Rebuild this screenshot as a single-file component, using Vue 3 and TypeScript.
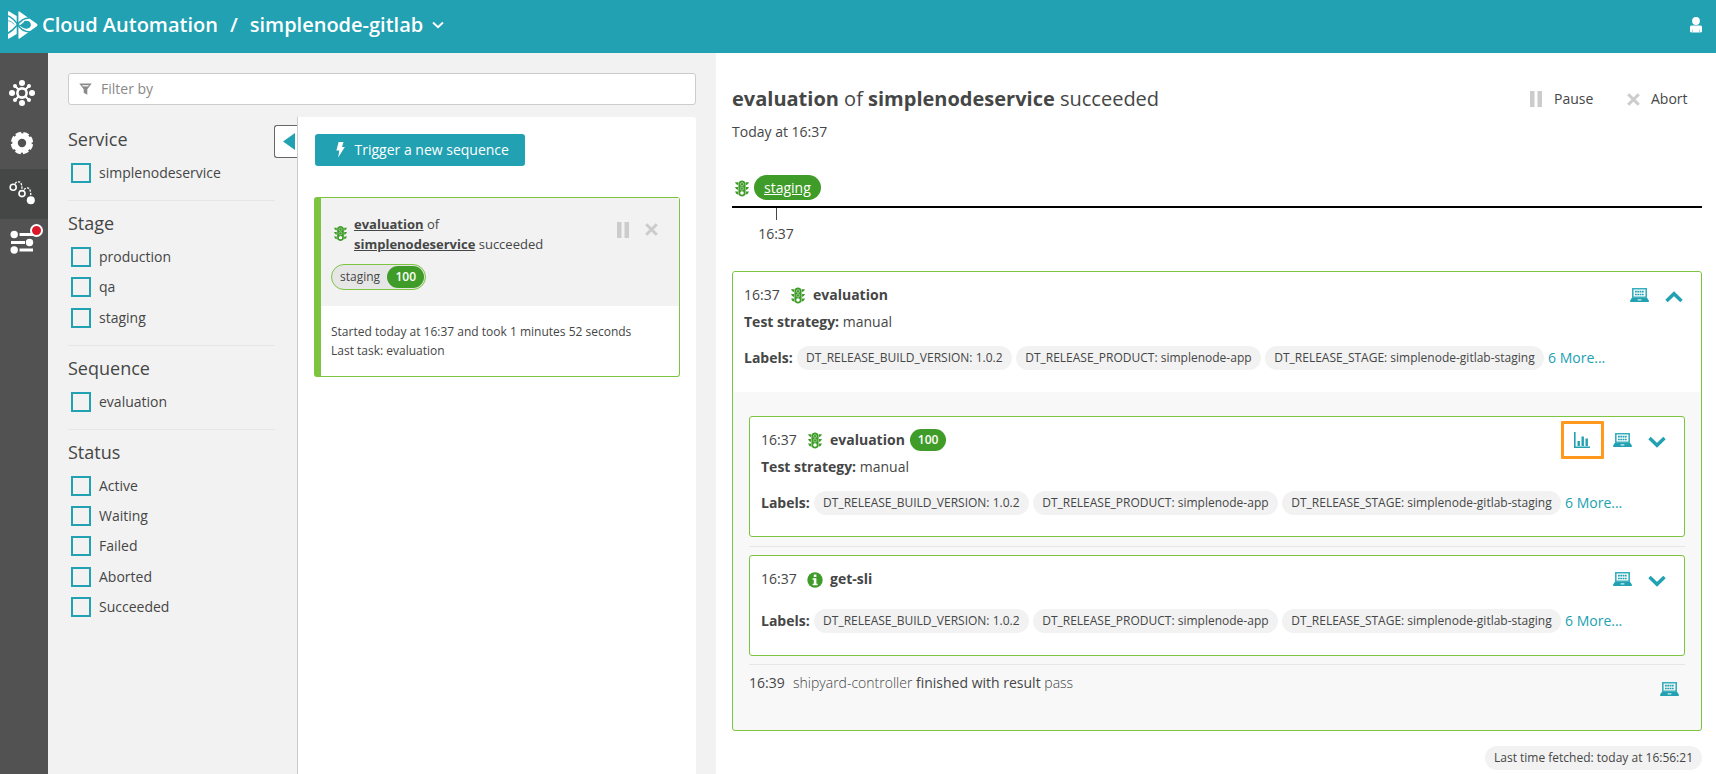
<script setup lang="ts">
interface FilterGroup {
  title: string
  options: string[]
}

interface Task {
  time: string
  icon: string
  name: string
  score?: number
  strategy?: string
}

const navItems = [
  { icon: 'hub', active: false },
  { icon: 'gear', active: false },
  { icon: 'sequence', active: true },
  { icon: 'sliders', active: false, badge: true },
]

const filters: FilterGroup[] = [
  { title: 'Service', options: ['simplenodeservice'] },
  { title: 'Stage', options: ['production', 'qa', 'staging'] },
  { title: 'Sequence', options: ['evaluation'] },
  { title: 'Status', options: ['Active', 'Waiting', 'Failed', 'Aborted', 'Succeeded'] },
]

const labels: string[] = [
  'DT_RELEASE_BUILD_VERSION: 1.0.2',
  'DT_RELEASE_PRODUCT: simplenode-app',
  'DT_RELEASE_STAGE: simplenode-gitlab-staging',
]

const tasks: Task[] = [
  { time: '16:37', icon: 'traffic', name: 'evaluation', score: 100, strategy: 'manual' },
  { time: '16:37', icon: 'info', name: 'get-sli' },
]
</script>

<template>
  <div class="app">
    <svg class="sprite" aria-hidden="true">
      <symbol id="traffic" viewBox="0 0 14 17">
        <path d="M4.400 1.400Q7-.6 9.600 1.400Q10.600 2 10.600 3V14Q10.600 15.200 9.600 15.500Q7 17.400 4.400 15.500Q3.400 15.200 3.400 14V3Q3.400 2 4.400 1.400Z" fill="#3f9c29" />
        <path d="M0 2.200H3V5.200Q.8 4.800 0 2.200ZM0 6.900H3V9.900Q.8 9.500 0 6.900ZM0 11.600H3V14.600Q.8 14.200 0 11.600ZM14 2.200H11V5.200Q13.200 4.800 14 2.200ZM14 6.900H11V9.900Q13.200 9.500 14 6.900ZM14 11.600H11V14.600Q13.200 14.200 14 11.600Z" fill="#3f9c29" />
        <circle cx="7" cy="4.200" r="1.600" fill="none" stroke="#a9d49f" stroke-width=".8" />
        <circle cx="7" cy="8.500" r="1.600" fill="none" stroke="#a9d49f" stroke-width=".8" />
        <circle cx="7" cy="13" r="1.800" fill="#fff" />
      </symbol>
      <symbol id="info" viewBox="0 0 16 16">
        <circle cx="8" cy="8" r="7.700" fill="#3f9c29" />
        <path d="M6.800 2.600h2.600v2.300H6.800zM5.600 6.300h3.800v5.500h1.200v1.400H5.600v-1.400h1.200V7.700H5.600z" fill="#fff" />
      </symbol>
      <symbol id="laptop" viewBox="0 0 19 14">
        <path fill-rule="evenodd" d="M2 0H17V9.800H2ZM3.600 1.500V8.600H15.400V1.500Z" fill="#35aebd" />
        <path d="M2.100 9.400H16.900L18.800 12.400V13.900H.2V12.400Z" fill="#21a1b2" />
        <path d="M5 3.600H14M5 6.500H14" stroke="#21a1b2" stroke-width="1.600" stroke-dasharray="1.800 .5" />
        <path d="M7.600 11.900H11.400" stroke="#fff" stroke-width="1" />
      </symbol>
      <symbol id="chart" viewBox="0 0 16 16">
        <path d="M.8 0V15.200H16" fill="none" stroke="#21a1b2" stroke-width="1.600" />
        <path d="M3.500 9H5.900V14H3.500ZM7.500 4.500H9.900V14H7.500ZM11.500 6.500H13.900V14H11.500Z" fill="#21a1b2" />
      </symbol>
      <symbol id="chevron" viewBox="0 0 18 12">
        <path d="M1.500 2L9 9.300L16.500 2" fill="none" stroke="#21a1b2" stroke-width="3.400" />
      </symbol>
      <symbol id="pause" viewBox="0 0 12 16">
        <path d="M0 0H4.500V16H0ZM7.500 0H12V16H7.500Z" fill="#ccc" />
      </symbol>
      <symbol id="cross" viewBox="0 0 13 13">
        <path d="M1.200 1.200L11.800 11.800M11.800 1.200L1.200 11.800" stroke="#ccc" stroke-width="3" />
      </symbol>
      <symbol id="hub" viewBox="0 0 26 26">
        <path d="M6 6L20 20M20 6L6 20" stroke="#fff" stroke-width="2" />
        <circle cx="13" cy="13" r="4.600" fill="#525252" stroke="#fff" stroke-width="2.600" />
        <g fill="#fff">
          <circle cx="13" cy="3" r="3" /><circle cx="13" cy="23" r="3" />
          <circle cx="3" cy="13" r="3" /><circle cx="23" cy="13" r="3" />
          <circle cx="6" cy="6" r="2" /><circle cx="20" cy="6" r="2" />
          <circle cx="6" cy="20" r="2" /><circle cx="20" cy="20" r="2" />
        </g>
      </symbol>
      <symbol id="gear" viewBox="0 0 26 26">
        <circle cx="13" cy="13" r="7" fill="none" stroke="#fff" stroke-width="5.600" />
        <circle cx="13" cy="13" r="9.900" fill="none" stroke="#fff" stroke-width="2.600" stroke-dasharray="5.600 2.175" stroke-dashoffset="-1.080" />
      </symbol>
      <symbol id="sequence" viewBox="0 0 26 26">
        <g fill="none" stroke="#fff">
          <circle cx="4.200" cy="7.200" r="3" stroke-width="1.600" />
          <circle cx="13" cy="13.600" r="3" stroke-width="1.600" />
          <path d="M6 3.600Q8 1 11 2.200Q13 3.500 13 9.500M15 9.600Q17.500 7 20 8.400Q21.800 10 21.800 16" stroke-width="1.300" stroke-dasharray="2.200 1.300" />
        </g>
        <circle cx="21.800" cy="20.200" r="4" fill="#fff" />
      </symbol>
      <symbol id="sliders" viewBox="0 0 26 26">
        <path d="M10.500 4.500H24M2 12.500H16M10.500 20H24" stroke="#fff" stroke-width="2.800" />
        <g fill="#fff">
          <circle cx="5.200" cy="4.500" r="3.700" /><circle cx="20.500" cy="12.500" r="3.700" /><circle cx="5.200" cy="20" r="3.700" />
        </g>
      </symbol>
    </svg>

    <header class="topbar">
      <svg class="logo" viewBox="0 0 31 28">
        <g fill="#fff">
          <path d="M1.800 .3L9.700 5V23L1.800 27.700Q1 28 1 27V1Q1 0 1.800 .3Z" />
          <path d="M12.300 .4L29.500 12.400Q31.500 14 29.500 15.400L12.300 27.700Q11.400 28 11.400 27V1Q11.400 0 12.300 .4Z" />
        </g>
        <path d="M11.200 14L16 10.200Q20.500 8.800 22.800 11Q25 14 22.800 16.600Q20 18.700 16 16.700Z" fill="#21a1b2" />
        <g fill="none" stroke="#21a1b2" stroke-width="1.500">
          <path d="M.5 4.600Q6.500 7 10.400 13.200Q15 21.200 23.500 20.900" />
          <path d="M.5 22.500Q6 19.500 9.800 14.500Q15.500 6.600 22.500 7" />
        </g>
        <path d="M.5 9.500Q4.500 10 7.500 13.500" fill="none" stroke="#21a1b2" stroke-width=".7" />
        <path d="M12.500 13.700L17 10.200" stroke="#fff" stroke-width="1.300" />
      </svg>
      <span class="brand">Cloud Automation</span>
      <span class="slash">/</span>
      <span class="project">simplenode-gitlab</span>
      <svg class="caret" viewBox="0 0 12 8"><path d="M1 1.500L6 6.300L11 1.500" fill="none" stroke="#fff" stroke-width="1.900" /></svg>
      <svg class="user" viewBox="0 0 12 16">
        <circle cx="6" cy="4" r="3.900" fill="#fff" />
        <path d="M1 8.500H11Q12 9 12 10V14.500Q11.500 15.500 10.500 15.500H1.500Q.5 15.500 0 14.500V10Q0 9 1 8.500Z" fill="#fff" />
        <path d="M2.500 12.500V15.500M9.500 12.500V15.500" stroke="#21a1b2" stroke-width=".4" />
      </svg>
    </header>

    <div class="body">
      <nav class="rail">
        <a v-for="item in navItems" :key="item.icon" class="rail-item" :class="{ active: item.active }">
          <svg class="rail-icon"><use :href="'#' + item.icon" /></svg>
          <i v-if="item.badge" class="badge"></i>
        </a>
      </nav>

      <section class="left">
        <div class="search">
          <svg class="funnel" viewBox="0 0 13 12"><path d="M.3 .5H12.700L8.300 6.300V11.800L4.700 9.800V6.300Z" fill="#8a8a8a" /><path d="M3 2H10L9 3.400H4Z" fill="#fff" opacity=".8" /></svg>
          <span>Filter by</span>
        </div>
        <div class="columns">
          <aside class="filters">
            <div v-for="group in filters" :key="group.title" class="group">
              <h3>{{ group.title }}</h3>
              <label v-for="option in group.options" :key="option"><i class="box"></i>{{ option }}</label>
            </div>
            <button class="collapse"><svg viewBox="0 0 12 17"><path d="M12 0V17L0 8.500Z" fill="#21a1b2" /></svg></button>
          </aside>
          <div class="sequences">
            <button class="trigger">
              <svg viewBox="0 0 9 16"><path d="M2.600 0H7.500L6 5H8.800L2.200 15.500L3.300 8.500H.4Z" fill="#fff" /></svg>
              Trigger a new sequence
            </button>
            <article class="seq-card">
              <div class="seq-head">
                <div class="seq-title">
                  <svg class="seq-icon"><use href="#traffic" /></svg>
                  <p><b>evaluation</b> of<br /><b>simplenodeservice</b> succeeded</p>
                  <svg class="seq-pause"><use href="#pause" /></svg>
                  <svg class="seq-cross"><use href="#cross" /></svg>
                </div>
                <div class="stage-chip"><span>staging</span><em>100</em></div>
              </div>
              <p class="seq-info">Started today at 16:37 and took 1 minutes 52 seconds<br />Last task: evaluation</p>
            </article>
          </div>
        </div>
      </section>

      <main class="detail">
        <div class="title-row">
          <h1><b>evaluation</b> of <b>simplenodeservice</b> succeeded</h1>
          <span class="action pause-action"><svg class="pause-icon"><use href="#pause" /></svg>Pause</span>
          <span class="action"><svg class="cross-icon"><use href="#cross" /></svg>Abort</span>
        </div>
        <p class="date">Today at 16:37</p>

        <div class="timeline">
          <svg class="traffic"><use href="#traffic" /></svg>
          <a>staging</a>
        </div>
        <div class="tick"><i></i><span>16:37</span></div>

        <section class="panel">
          <div class="entry main-entry">
            <div class="entry-head">
              <span class="time">16:37</span>
              <svg class="traffic"><use href="#traffic" /></svg>
              <b>evaluation</b>
              <div class="tools">
                <svg class="laptop"><use href="#laptop" /></svg>
                <svg class="chevron up"><use href="#chevron" /></svg>
              </div>
            </div>
            <p class="strategy"><b>Test strategy:</b> manual</p>
            <div class="labels">
              <b>Labels:</b>
              <span v-for="label in labels" :key="label" class="chip">{{ label }}</span>
              <a>6 More...</a>
            </div>
          </div>
          <div class="nested">
            <template v-for="task in tasks" :key="task.name">
              <div class="entry card" :class="{ compact: !task.strategy }">
                <div class="entry-head">
                  <span class="time">{{ task.time }}</span>
                  <svg :class="task.icon"><use :href="'#' + task.icon" /></svg>
                  <b>{{ task.name }}</b>
                  <em v-if="task.score">{{ task.score }}</em>
                  <div class="tools">
                    <span v-if="task.score" class="highlight"><svg class="chart"><use href="#chart" /></svg></span>
                    <svg class="laptop"><use href="#laptop" /></svg>
                    <svg class="chevron"><use href="#chevron" /></svg>
                  </div>
                </div>
                <p v-if="task.strategy" class="strategy"><b>Test strategy:</b> {{ task.strategy }}</p>
                <div class="labels">
                  <b>Labels:</b>
                  <span v-for="label in labels" :key="label" class="chip">{{ label }}</span>
                  <a>6 More...</a>
                </div>
              </div>
              <hr />
            </template>
            <div class="result">
              <span class="time">16:39</span>
              <p>shipyard-controller <strong>finished with result</strong> pass</p>
              <svg class="laptop"><use href="#laptop" /></svg>
            </div>
          </div>
        </section>
        <div class="fetched"><span class="chip">Last time fetched: today at 16:56:21</span></div>
      </main>
    </div>
  </div>
</template>

<style>
body {
  margin: 0;
  overflow: hidden;
}
</style>

<style scoped>
* {
  box-sizing: border-box;
}
.app {
  display: flex;
  flex-direction: column;
  height: 774px;
  overflow: hidden;
  background: #fff;
  color: #454646;
  font: 14px/20px 'Open Sans', 'Noto Sans', sans-serif;
}
.sprite {
  position: absolute;
  width: 0;
  height: 0;
}
svg {
  display: block;
  flex: none;
}
p, h1, h3 {
  margin: 0;
}
em {
  font-style: normal;
}
button {
  border: 0;
  padding: 0;
  font: inherit;
}
.topbar {
  display: flex;
  flex: none;
  align-items: center;
  height: 53px;
  padding: 0 14px 4px 7px;
  background: #21a1b2;
  color: #fff;
  font-size: 20px;
  font-weight: 600;
}
.logo {
  width: 31px;
  height: 28px;
  margin-top: 1px;
}
.brand {
  margin-left: 4px;
}
.slash {
  margin: 0 12px;
}
.caret {
  width: 12px;
  height: 8px;
  margin-left: 9px;
}
.user {
  width: 12px;
  height: 16px;
  margin-left: auto;
}
.body {
  display: flex;
  flex: 1;
  min-height: 0;
}
.rail {
  flex: none;
  width: 48px;
  padding-top: 16px;
  background: #525252;
}
.rail-item {
  position: relative;
  display: flex;
  align-items: center;
  height: 50px;
  padding: 0 0 2px 9px;
}
.active {
  background: #454646;
}
.rail-icon {
  width: 26px;
  height: 26px;
}
.badge {
  position: absolute;
  top: 5px;
  left: 30px;
  width: 13px;
  height: 13px;
  border: 2px solid #fff;
  border-radius: 50%;
  background: #dc172a;
}
.left {
  display: flex;
  flex-direction: column;
  flex: none;
  width: 668px;
  padding: 20px 20px 0;
  background: #f2f2f2;
}
.search {
  display: flex;
  flex: none;
  align-items: center;
  gap: 9px;
  height: 32px;
  padding: 0 10px 1px;
  border: 1px solid #ccc;
  border-radius: 3px;
  background: #fff;
  color: #898989;
}
.funnel {
  width: 13px;
  height: 12px;
}
.columns {
  display: flex;
  flex: 1;
  margin-top: 12px;
}
.filters {
  position: relative;
  flex: none;
  width: 229px;
  padding: 10px 22px 0 0;
}
.group + .group {
  margin-top: 12px;
  padding-top: 10px;
  border-top: 1px solid #e6e6e6;
}
h3 {
  margin-bottom: 6.600px;
  font-size: 18px;
  font-weight: 400;
  line-height: 24px;
}
label {
  display: flex;
  align-items: center;
  height: 30.400px;
  padding-left: 3px;
}
.box {
  width: 20px;
  height: 20px;
  margin-right: 8px;
  border: 2px solid #21a1b2;
}
.collapse {
  position: absolute;
  top: 8px;
  right: 0;
  width: 23px;
  height: 33px;
  padding-left: 8px;
  border: 1px solid #666;
  border-right: 0;
  border-radius: 3px 0 0 3px;
  background: #fff;
}
.collapse svg {
  width: 12px;
  height: 17px;
}
.sequences {
  flex: 1;
  padding: 17px 16px 0 16px;
  border-left: 1px solid #ccc;
  border-radius: 0 3px 0 0;
  background: #fff;
}
.trigger {
  display: flex;
  align-items: center;
  gap: 9.500px;
  width: 210px;
  height: 32px;
  margin-left: 1px;
  padding-left: 21px;
  border-radius: 3px;
  background: #21a1b2;
  color: #fff;
  font-weight: 500;
}
.trigger svg {
  width: 9px;
  height: 16px;
}
.seq-card {
  height: 180px;
  margin-top: 31px;
  border: 1px solid #7dc540;
  border-left-width: 7px;
  border-radius: 3px;
}
.seq-head {
  height: 108px;
  padding: 16px 22px 0 10px;
  background: #f2f2f2;
}
.seq-title {
  display: flex;
  font-size: 13px;
}
.seq-title p {
  margin-left: 7.500px;
  margin-right: auto;
}
.seq-title b {
  text-decoration: underline;
}
.seq-icon {
  width: 13px;
  height: 17px;
  margin: 10.500px 0 0 2.500px;
}
.seq-pause {
  width: 12px;
  height: 16px;
  margin-top: 7.500px;
}
.seq-cross {
  width: 13px;
  height: 13px;
  margin: 9px -.5px 0 15.500px;
}
.stage-chip {
  display: flex;
  align-items: center;
  justify-content: space-between;
  width: 95px;
  height: 26px;
  margin-top: 10px;
  padding: 0 1px 1px 8px;
  border: 1px solid #7dc540;
  border-radius: 13px;
  background: #e6e6e6;
  font-size: 12px;
}
em {
  height: 22px;
  padding: 0 8px;
  border-radius: 11px;
  background: #3f9c29;
  color: #fff;
  font-size: 12px;
  font-weight: 600;
  line-height: 22px;
}
.seq-info {
  padding: 16px 10px 0;
  font-size: 12px;
  line-height: 19.200px;
}
.detail {
  flex: 1;
  padding: 32px 14px 0 16px;
}
.title-row {
  display: flex;
  align-items: center;
  height: 28px;
}
h1 {
  margin-right: auto;
  font-size: 20px;
  font-weight: 400;
  line-height: 28px;
}
.action {
  display: flex;
  align-items: center;
  gap: 11px;
  width: 75px;
}
.pause-action {
  gap: 12px;
  width: 97px;
}
.pause-icon {
  width: 12px;
  height: 16px;
}
.cross-icon {
  width: 13px;
  height: 13px;
}
.date {
  margin-top: 9px;
}
.timeline {
  display: flex;
  align-items: flex-start;
  height: 66px;
  padding: 33px 0 0 3px;
  border-bottom: 2px solid #000;
}
.timeline a {
  height: 25px;
  margin-left: 5px;
  padding: 0 10px;
  border-radius: 12.500px;
  background: #3f9c29;
  color: #fff;
  line-height: 25px;
  text-decoration: underline;
}
.traffic {
  width: 14px;
  height: 17px;
}
.timeline .traffic {
  margin-top: 5px;
}
.tick {
  display: flex;
  flex-direction: column;
  align-items: center;
  width: 36px;
  margin-left: 26px;
}
.tick i {
  width: 1px;
  height: 12px;
  background: #454646;
}
.tick span {
  margin-top: 4px;
}
.panel {
  height: 460px;
  margin-top: 27px;
  border: 1px solid #7dc540;
  border-radius: 3px;
  background: #f8f8f8;
}
.entry {
  padding: 13px 18px 21px 11px;
  background: #fff;
}
.main-entry {
  height: 120px;
  border-radius: 3px 3px 0 0;
}
.card {
  height: 121px;
  border: 1px solid #7dc540;
  border-radius: 3px;
}
.compact {
  height: 101px;
}
.compact .labels {
  margin-top: 20px;
}
.entry-head {
  display: flex;
  align-items: center;
  height: 20px;
}
.time {
  width: 36px;
  margin-right: 11px;
}
.entry-head b {
  margin-left: 8px;
}
.info {
  width: 16px;
  height: 16px;
  margin: 1px -1px 0 -1px;
}
.entry-head em {
  margin-left: 5px;
}
.tools {
  display: flex;
  align-items: center;
  margin-left: auto;
}
.laptop {
  width: 19px;
  height: 14px;
}
.chevron {
  width: 18px;
  height: 12px;
  margin: 3px 0 0 16.500px;
}
.up {
  transform: scaleY(-1);
}
.highlight {
  display: flex;
  align-items: center;
  justify-content: center;
  width: 43px;
  height: 38px;
  margin: -9px 9px -9px 0;
  border: 3px solid #ff981c;
  border-radius: 1px;
}
.chart {
  width: 16px;
  height: 16px;
}
.strategy {
  margin-top: 7px;
}
.labels {
  display: flex;
  align-items: center;
  gap: 4px;
  height: 24px;
  margin-top: 14px;
}
.labels a {
  color: #21a1b2;
}
.chip {
  height: 24px;
  padding: 0 9px;
  border-radius: 12px;
  background: #f2f2f2;
  font-size: 12px;
  line-height: 24px;
}
.labels .chip {
  padding: 0 9.350px;
}
.nested {
  padding: 24px 16px 0;
}
hr {
  height: 1px;
  margin: 9px 0 8px;
  border: 0;
  background: #e6e6e6;
}
.compact + hr {
  margin-top: 8px;
}
.result {
  display: flex;
  align-items: flex-start;
  padding: 0 6.500px 0 0;
}
.result .time {
  margin-right: 8px;
}
.result p {
  font-weight: 300;
}
.result strong {
  font-weight: 400;
}
.result .laptop {
  margin: 9px 0 0 auto;
}
.fetched {
  display: flex;
  justify-content: flex-end;
  margin-top: 15px;
}
</style>
